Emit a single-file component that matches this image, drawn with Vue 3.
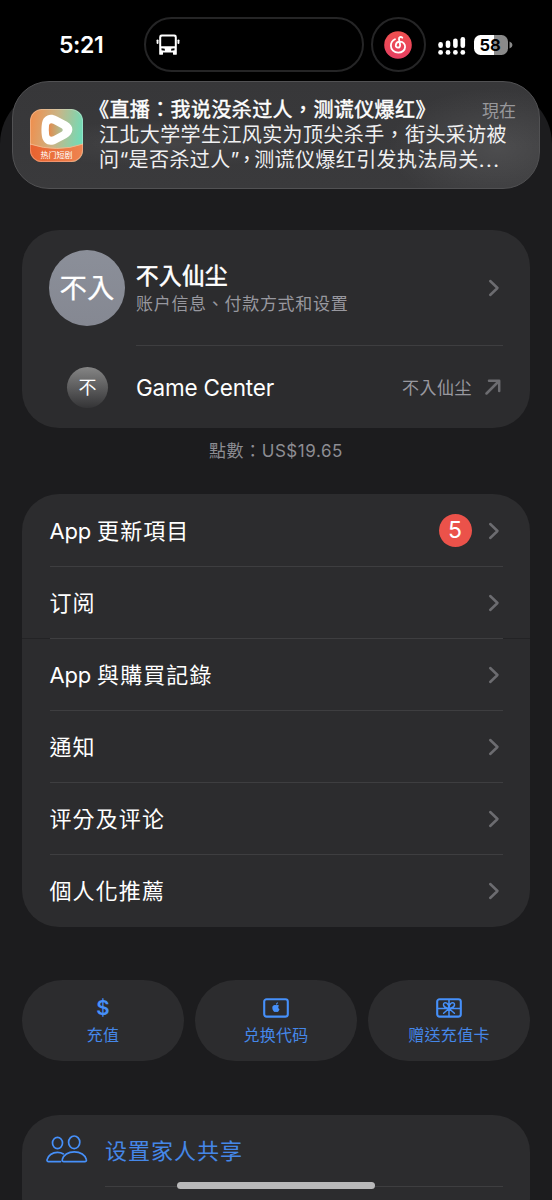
<script setup>
const menu = [
  { latin: 'App', text: '更新項目', badge: 5 },
  { text: '订阅', seam: true },
  { latin: 'App', text: '與購買記錄' },
  { text: '通知' },
  { text: '评分及评论' },
  { text: '個人化推薦' },
]
</script>

<template>
  <div class="screen">
    <header class="status">
      <div class="time">5:21</div>
      <div class="island">
        <svg class="bus" width="24" height="22" viewBox="0 0 24 22">
          <path fill="#fff" fill-rule="evenodd" d="M5.6 .6h12.800a2.400 2.400 0 0 1 2.400 2.400v16.900a.9.9 0 0 1-.9.9h-2a.9.9 0 0 1-.9-.9v-1.500H7v1.500a.9.9 0 0 1-.9.9h-2a.9.9 0 0 1-.9-.9V3A2.400 2.400 0 0 1 5.600.6zM5.200 3.500v8.700h13.600V3.500a1 1 0 0 0-1-1H6.200a1 1 0 0 0-1 1zM5.500 14.300v2l3.300.4v-1.900zM18.500 14.300v2l-3.300.4v-1.900z" />
          <rect x=".6" y="5.400" width="1.900" height="4.600" rx=".9" fill="#fff" />
          <rect x="21.500" y="5.400" width="1.900" height="4.600" rx=".9" fill="#fff" />
        </svg>
      </div>
      <div class="bubble">
        <svg width="28" height="28" viewBox="0 0 28 28">
          <defs>
            <linearGradient id="music" x1="0" y1="0" x2="0" y2="1">
              <stop offset="0" stop-color="#f0504f" />
              <stop offset="1" stop-color="#e63f62" />
            </linearGradient>
          </defs>
          <circle cx="14" cy="14" r="13.800" fill="url(#music)" />
          <path fill="none" stroke="#fff" stroke-width="1.800" stroke-linecap="round" d="M18.300 6.700c-1.500-1.400-3.700-.5-3.300 1.500l1.100 5.500c.3 1.800-.7 3-2.100 3s-2.400-1.100-2.200-2.700c.3-2.200 2.300-3.400 4.300-3.300 3.200.1 5.100 2.500 5 5.200-.1 3.300-3 5.800-6.800 5.800-4.200 0-7.400-3-7.400-7 0-2.900 1.600-5.200 4.100-6.400" />
        </svg>
      </div>
      <svg class="signal" width="28" height="20" viewBox="0 0 28 20" fill="#fff">
        <rect x=".3" y="6" width="4.600" height="6" rx="2.200" />
        <rect x="7.700" y="4.500" width="4.600" height="7.500" rx="2.200" />
        <rect x="15.100" y="2.500" width="4.600" height="9.500" rx="2.200" />
        <rect x="22.500" y="1" width="4.600" height="11" rx="2.200" />
        <circle cx="2.600" cy="16.400" r="2.400" />
        <circle cx="10" cy="16.400" r="2.400" />
        <circle cx="17.400" cy="16.400" r="2.400" />
        <circle cx="24.800" cy="16.400" r="2.400" />
      </svg>
      <div class="battery">58</div>
      <svg class="tip" width="4" height="8" viewBox="0 0 4 8"><path d="M.5.500Q3.500 1.800 3.500 4T.5 7.500z" fill="#8a8a8a" /></svg>
    </header>

    <aside class="notice">
      <svg class="app-icon" width="53" height="53" viewBox="0 0 53 53">
        <defs>
          <linearGradient id="tile" x1="0" y1=".25" x2="1" y2=".4">
            <stop offset="0" stop-color="#ef8f4e" />
            <stop offset=".5" stop-color="#c9b587" />
            <stop offset="1" stop-color="#6fdcb8" />
          </linearGradient>
          <linearGradient id="band" x1="0" y1="0" x2="1" y2="0">
            <stop offset="0" stop-color="#e8622f" />
            <stop offset="1" stop-color="#ee8450" />
          </linearGradient>
          <linearGradient id="play" x1="0" y1="0" x2="1" y2="0">
            <stop offset="0" stop-color="#e58a4c" />
            <stop offset="1" stop-color="#a9c49a" />
          </linearGradient>
          <clipPath id="round"><rect width="53" height="53" rx="12" /></clipPath>
        </defs>
        <g clip-path="url(#round)">
          <rect width="53" height="53" fill="url(#tile)" />
          <path d="M0 35Q27 44 53 35V53H0z" fill="url(#band)" />
          <path d="M0 35Q27 44 53 35" fill="none" stroke="#f2b58a" stroke-width="1" />
        </g>
        <path d="M17.500 6.500c3-1.300 6-.7 9.500 1L37 12.800c7.500 4.200 7 12-.5 16.200L26.500 34.300c-7 3.600-13.500.5-14.600-7-.6-4.500-.6-9 .1-13.300.6-3.600 2.500-6.300 5.500-7.500z" fill="#fff" />
        <path d="M19 16.500c.5-2.400 2.300-2.700 4.300-1.700l8.300 4.500c1.500 1 1.500 2.600 0 3.500l-8.300 4.400c-2 1-3.800.5-4.200-1.700-.4-3-.4-6-.1-9z" fill="url(#play)" />
        <rect x=".4" y=".4" width="52.200" height="52.200" rx="11.700" fill="none" stroke="#fff" stroke-opacity=".35" stroke-width=".8" />
        <text x="26.500" y="48.600" text-anchor="middle" class="icon-label">热门短剧</text>
      </svg>
      <div class="notice-body">
        <div class="notice-head">
          <span class="notice-title">《直播：我说没杀过人，测谎仪爆红》</span>
          <span class="now">現在</span>
        </div>
        <div class="notice-text">江北大学学生江风实为顶尖杀手，街头采访被</div>
        <div class="notice-text">问“是否杀过人<span class="tight">”，</span>测谎仪爆红引发执法局关<span class="dots">...</span></div>
      </div>
    </aside>

    <main class="sheet">
      <section class="card account">
        <div class="profile">
          <div class="avatar">不入</div>
          <div class="who">
            <div class="name">不入仙尘</div>
            <div class="sub">账户信息、付款方式和设置</div>
          </div>
          <svg class="chev" width="12" height="18" viewBox="0 0 12 18"><path d="M2.200 2 9.500 9 2.200 16" /></svg>
        </div>
        <div class="game">
          <div class="mini">不</div>
          <div class="game-name">Game Center</div>
          <div class="game-id">不入仙尘</div>
          <svg class="arrow" width="16" height="16" viewBox="0 0 16 16"><path d="M1.500 14.500 14 2M4 1.800h10.200V12" /></svg>
        </div>
      </section>

      <p class="credit">點數：US$19.65</p>

      <section class="card menu">
        <div v-for="item in menu" :key="item.text" class="row" :class="{ seam: item.seam }">
          <div class="row-in">
            <div class="label"><span v-if="item.latin" class="latin">{{ item.latin }}</span>{{ item.text }}</div>
            <div v-if="item.badge" class="badge">{{ item.badge }}</div>
            <svg class="chev" width="12" height="18" viewBox="0 0 12 18"><path d="M2.200 2 9.500 9 2.200 16" /></svg>
          </div>
        </div>
      </section>

      <section class="actions">
        <div class="pill">
          <div class="dollar">$</div>
          <div class="pill-text">充值</div>
        </div>
        <div class="pill">
          <svg width="26" height="20" viewBox="0 0 26 20">
            <rect x="1.200" y="1.200" width="23.600" height="17.400" rx="2.400" fill="none" stroke="#4690fa" stroke-width="2.100" />
            <path fill="#4690fa" d="M13.100 7.300c.7-.5 2.200-.7 3 .5-1.300.9-1.100 2.800.4 3.500-.5 1.400-1.300 2.700-2.200 2.700-.6 0-.7-.3-1.300-.3s-.8.3-1.300.3c-1.100 0-2.400-2.300-2.400-4.200 0-2.300 2-3.300 3.800-2.500zM13 6.700c0-1.200.8-2.200 1.900-2.400.1 1.300-.8 2.300-1.900 2.400z" />
          </svg>
          <div class="pill-text">兑换代码</div>
        </div>
        <div class="pill">
          <svg width="26" height="20" viewBox="0 0 26 20" fill="none" stroke="#4690fa">
            <rect x="1.200" y="1.200" width="23.600" height="17.400" rx="2.400" stroke-width="2.100" />
            <path stroke-width="1.500" stroke-linecap="round" d="M2 10.500h22M13 2v16M13 10.300c-1.500-.1-5-.5-5.500-3.300-.3-1.900 1.600-3 3.300-1.900C12.600 6.200 13 8.500 13 10.300zM13 10.300c1.500-.1 5-.5 5.500-3.300.3-1.900-1.600-3-3.300-1.900C13.400 6.200 13 8.500 13 10.300zM13 10.500l-5.400 4.800M13 10.500l5.400 4.800" />
          </svg>
          <div class="pill-text">赠送充值卡</div>
        </div>
      </section>

      <section class="card family">
        <svg width="42" height="28" viewBox="0 0 42 28" fill="none" stroke="#4690fa" stroke-width="1.700">
          <ellipse cx="11.500" cy="8" rx="5" ry="5.600" />
          <ellipse cx="28.200" cy="7.300" rx="5.600" ry="6.300" />
          <path stroke-linecap="round" stroke-linejoin="round" d="M14.500 26.600H2.600c-1.200 0-1.800-.8-1.500-2 .9-3.900 5.100-7.200 10.400-7.200 2.300 0 4.200.5 5.900 1.500" />
          <path d="M17.900 26.600c-1.400 0-2-.9-1.600-2.200 1-4.100 5.800-7.600 12-7.600s11 3.500 12 7.600c.4 1.300-.2 2.200-1.600 2.200z" />
        </svg>
        <div class="family-row">设置家人共享</div>
      </section>
    </main>
    <div class="home"></div>
  </div>
</template>

<style>
html, body { margin: 0; background: #000; }
</style>

<style scoped>
.screen {
  position: relative;
  width: 552px;
  height: 1200px;
  overflow: hidden;
  background: #000;
  color: #fff;
  font-family: Inter, "Noto Sans CJK TC", sans-serif;
  font-size: 22px;
}
.screen * { box-sizing: border-box; }
.screen svg { flex: none; display: block; }

.status { height: 88px; display: flex; align-items: flex-start; }
.time { width: 144px; padding: 31px 0 0 59px; font-size: 23px; line-height: 28px; font-weight: 600; letter-spacing: -.4px; }
.island { width: 220px; height: 55px; margin-top: 17px; border: 2px solid #252526; border-radius: 28px; padding: 15px 0 0 10px; }
.bubble { width: 55px; height: 55px; margin: 17px 0 0 7px; border: 2px solid #252526; border-radius: 50%; padding: 11.500px 11px; }
.signal { margin: 36px 0 0 12px; }
.battery {
  width: 34px; height: 20px; margin: 35px 0 0 8px; border-radius: 6.500px; padding-right: 2px;
  background: linear-gradient(90deg, #fff 58%, #8a8a8a 58%);
  color: #000; font-size: 16.500px; font-weight: 700; line-height: 20px; text-align: center; letter-spacing: -.2px;
}
.tip { margin: 41px 0 0 1px; }

.notice {
  position: absolute; z-index: 2; left: 12px; top: 81px; width: 528px; height: 108px;
  display: flex; border-radius: 37px; border: 1px solid #515153;
  background:
    radial-gradient(ellipse 110px 60px at 92% 62%, rgba(255,255,255,.1), transparent),
    radial-gradient(ellipse 150px 24px at 30% 58%, rgba(255,255,255,.06), transparent),
    linear-gradient(#373739, #3a3a3c);
  padding: 16px 22px 0 17px;
}
.app-icon { margin-top: 11px; }
.icon-label { font-size: 8px; fill: #fff; }
.notice-body { flex: 1; margin-left: 16px; white-space: nowrap; }
.notice-head { display: flex; justify-content: space-between; height: 25px; line-height: 25px; }
.notice-title { font-size: 20px; letter-spacing: .4px; margin-left: -10px; -webkit-text-stroke: .45px #fff; }
.now { font-size: 17px; color: #98989b; line-height: 26px; margin-right: 1px; }
.notice-text { font-size: 20px; line-height: 25px; height: 25px; letter-spacing: .4px; color: #f0f0f1; }
.tight { letter-spacing: -2.600px; }
.dots { letter-spacing: 1.600px; }

.sheet { height: 1112px; padding: 142px 22px 0; background: #1c1c1e; border-radius: 56px 56px 0 0; }
.card { background: #2c2c2e; border-radius: 37px; }
.account { height: 198px; padding: 0 27px; }
.profile { display: flex; height: 116px; align-items: center; position: relative; }
.avatar {
  width: 76px; height: 76px; border-radius: 50%; background: linear-gradient(#8b8f99, #858892);
  font-size: 27.500px; -webkit-text-stroke: .2px #fff; line-height: 77px; text-align: center;
}
.who { flex: 1; height: 116px; margin-left: 11px; padding-top: 31px; border-bottom: 1.500px solid #3e3e40; align-self: flex-start; }
.name { font-size: 22.500px; line-height: 30px; letter-spacing: .5px; -webkit-text-stroke: .6px #fff; }
.sub { font-size: 17px; line-height: 26px; color: #98989f; letter-spacing: .7px; white-space: nowrap; }
.profile .chev { position: absolute; right: 3px; top: 49px; }
.chev path, .arrow path { fill: none; stroke: #6c6c70; stroke-width: 2.500; stroke-linecap: round; stroke-linejoin: round; }
.game { display: flex; align-items: center; height: 82px; padding-left: 18px; }
.mini { width: 41px; height: 41px; border-radius: 50%; background: linear-gradient(#858585, #343436); font-size: 18px; line-height: 42px; text-align: center; }
.game-name { flex: 1; margin-left: 28px; font-size: 22.500px; letter-spacing: -.2px; }
.game-id { font-size: 17px; letter-spacing: .5px; color: #98989f; margin-right: 13px; padding-bottom: 2px; }
.arrow { margin-right: 2px; }
.credit { margin: 0; height: 66px; padding-top: 10px; text-align: center; font-size: 17px; line-height: 26px; color: #8d8d93; letter-spacing: .55px; }

.menu { height: 433px; padding-top: 1px; }
.row { height: 72px; padding: 0 27.500px; }
.row-in { height: 72px; display: flex; align-items: center; border-bottom: 1.500px solid #3e3e40; }
.row:last-child .row-in { border-color: transparent; }
.seam { background: linear-gradient(#232325, #232325) 0 100% / 100% 1px no-repeat; }
.label { flex: 1; font-size: 22px; letter-spacing: 1.100px; padding-bottom: 3px; }
.latin { letter-spacing: -.2px; margin-right: 6px; }
.badge { width: 33px; height: 33px; border-radius: 50%; background: #eb524a; font-size: 23px; line-height: 33px; text-align: center; margin-right: 16px; }
.row .chev { margin-right: 3px; }

.actions { display: flex; gap: 11px; margin-top: 53px; }
.pill { flex: 1; height: 81px; border-radius: 41px; background: #2c2c2e; display: flex; flex-direction: column; align-items: center; padding-top: 18px; color: #4690fa; }
.dollar { height: 20px; font-size: 20.500px; font-weight: 600; line-height: 20px; }
.pill-text { font-size: 16px; line-height: 24px; letter-spacing: .3px; margin-top: 5px; color: #4587e8; }

.family { height: 120px; margin-top: 54px; padding: 0 27px 0 24px; display: flex; gap: 17px; }
.family > svg { margin-top: 20px; }
.family-row { flex: 1; height: 72px; padding-top: 20px; line-height: 32px; color: #4587e8; letter-spacing: 1px; border-bottom: 1.500px solid #3e3e40; }
.home { position: absolute; z-index: 3; left: 177px; top: 1182px; width: 198px; height: 7px; border-radius: 4px; background: #b9b9ba; }
</style>
